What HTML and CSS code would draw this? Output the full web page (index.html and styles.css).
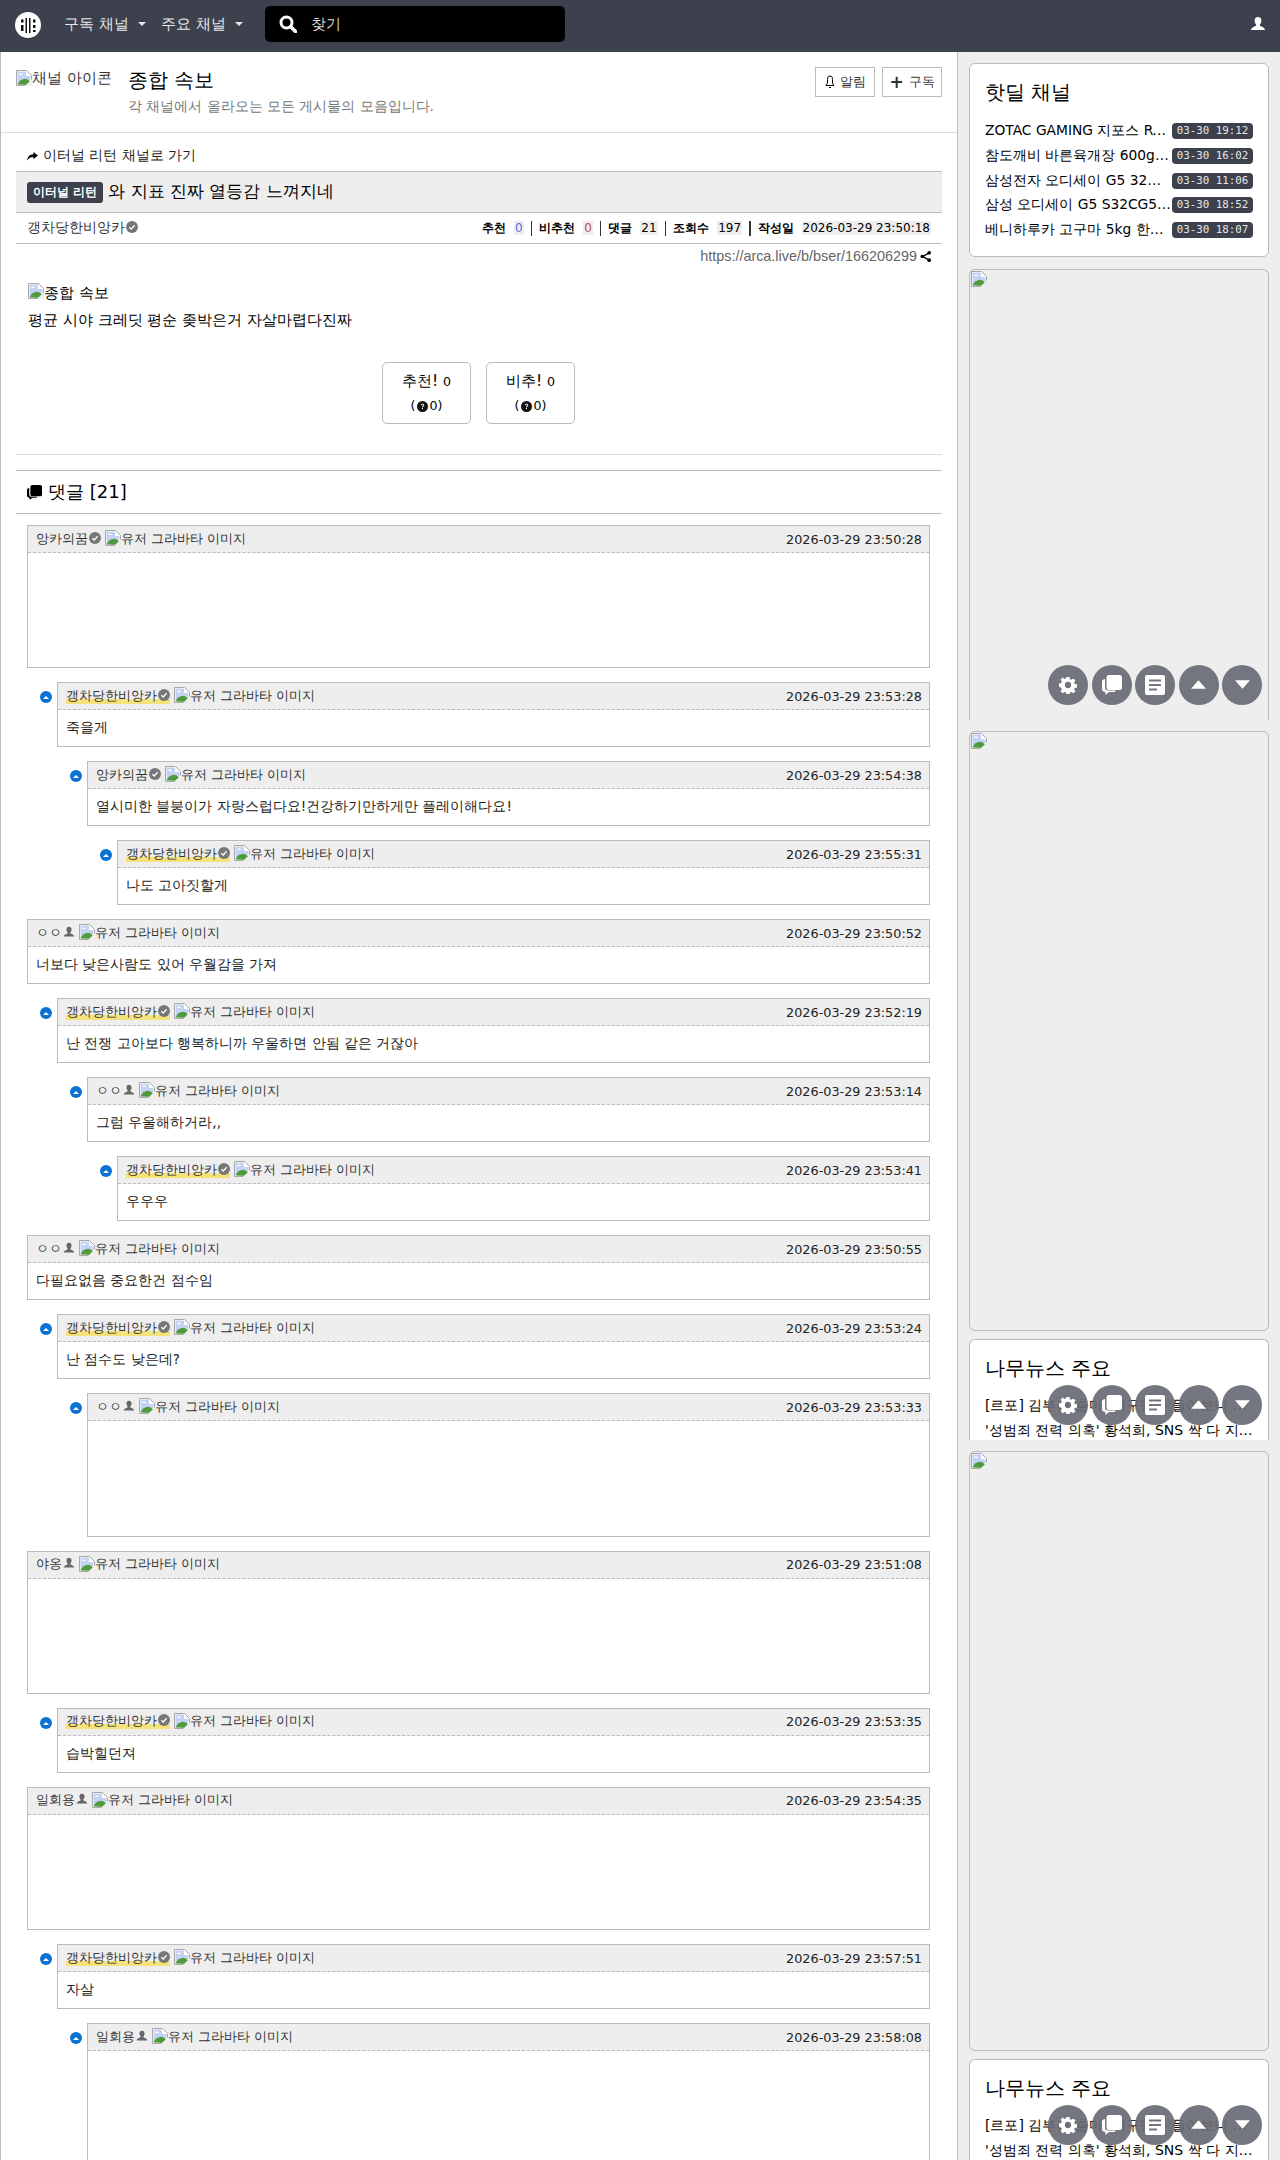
FILE: index.html
```html
<!DOCTYPE html>
<html>
<head>
    <meta charset="UTF-8">
    <meta name="viewport" content="width=device-width, initial-scale=1.0">
    <title>와 지표 진짜 열등감 느껴지네</title>
    <link rel="stylesheet" href="styles.css">
</head>
<body>
    <!-- shared icons -->
    <svg class="icon-defs" width="0" height="0">
        <symbol id="i-broken" viewBox="0 0 16 16">
            <path d="M.5.5h10l5 5v10H.5z" fill="#fff" stroke="#a8a8a8"/>
            <path d="M1.500 1.500h8.500v4.500h4.500v4L1.500 14z" fill="#c4d3f4"/>
            <path d="M3 5c1-2 3-2 4 0z" fill="#fff"/>
            <path d="M1.500 14.500c2-5 7-7 10-5l3 2v3.500z" fill="#4f9a3c"/>
            <path d="M9 16l7-7v7z" fill="#eee"/>
        </symbol>
        <symbol id="i-check" viewBox="0 0 16 16">
            <circle cx="8" cy="8" r="8" fill="#777"/>
            <path d="M4.500 8.300l2.500 2.400 4.500-5" fill="none" stroke="#fff" stroke-width="1.600"/>
        </symbol>
        <symbol id="i-user" viewBox="0 0 16 16">
            <path d="M8 1c2.300 0 3.400 1.700 3.400 3.700 0 1.500-.6 2.900-1.500 3.600v1.200c0 .7 5.100 1.500 5.100 4.500H1c0-3 5.100-3.800 5.100-4.500V8.300C5.200 7.600 4.600 6.200 4.600 4.700 4.600 2.700 5.700 1 8 1z"/>
        </symbol>
        <symbol id="i-collapse" viewBox="0 0 16 16">
            <circle cx="8" cy="8" r="8" fill="#0b72d4"/>
            <path d="M4 10.500L8 6.500l4 4z" fill="#fff"/>
        </symbol>
        <symbol id="i-help" viewBox="0 0 16 16">
            <circle cx="8" cy="8" r="8" fill="#111"/>
            <path d="M5.600 6.200C5.700 4.700 6.800 4 8.100 4c1.400 0 2.400.8 2.400 2 0 1.800-1.900 1.700-1.900 3.300H7.300c0-2.200 1.800-2.200 1.800-3.200 0-.5-.4-.9-1-.9-.7 0-1.100.4-1.200 1zM7.200 10.300h1.500v1.600H7.200z" fill="#fff"/>
        </symbol>
        <symbol id="i-bubbles" viewBox="0 0 20 20">
            <rect x="4.500" y="0" width="15.500" height="15" rx="2.500"/>
            <path d="M3 4v9c0 1.500 1 2.500 2.500 2.500H14l-1.500 1.500H7l-3.500 3v-3C1.500 17 0 16 0 14V6.500C0 5 1.500 4 3 4z"/>
        </symbol>
        <symbol id="i-gear" viewBox="0 0 20 20">
            <path d="M8.300 1h3.400l.5 2.500 1.500.7 2.200-1.400 2.300 2.300-1.400 2.200.6 1.500 2.600.5v3.400l-2.600.5-.6 1.500 1.400 2.200-2.300 2.300-2.200-1.400-1.500.6-.5 2.600H8.300l-.5-2.600-1.500-.6-2.200 1.400-2.300-2.300 1.400-2.200-.6-1.500L0 11.700V8.300l2.600-.5.6-1.500-1.400-2.200 2.300-2.300 2.200 1.400 1.500-.7zM10 6.500a3.500 3.500 0 100 7 3.500 3.500 0 000-7z" fill-rule="evenodd"/>
        </symbol>
        <symbol id="i-list" viewBox="0 0 20 20">
            <path d="M2 0h16a2 2 0 012 2v16a2 2 0 01-2 2H2a2 2 0 01-2-2V2a2 2 0 012-2zm2 4.500v2h12v-2zm0 4.500v2h12V9zm0 4.500v2h8v-2z" fill-rule="evenodd"/>
        </symbol>
        <symbol id="i-up" viewBox="0 0 16 10"><path d="M8 0l8 9H0z"/></symbol>
        <symbol id="i-down" viewBox="0 0 16 10"><path d="M0 0h16L8 9z"/></symbol>
    </svg>

    <!-- Header -->
    <header class="navbar">
        <svg class="logo" viewBox="0 0 26 26">
            <circle cx="13" cy="13" r="13" fill="#fff"/>
            <path d="M6 7.500h2.500v3H6zM6 13h2.500v6H6zM10.500 6H12v15h-1.500zM14 6h1.500v15H14zM18 7.500h2.500v3H18zM18 13h2.500v3H18zM18 18h2.500v2H18z" fill="#111"/>
        </svg>
        <a class="nav-link">구독 채널<i class="caret"></i></a>
        <a class="nav-link">주요 채널<i class="caret"></i></a>
        <div class="nav-search">
            <svg class="search-icon" viewBox="0 0 18 18">
                <circle cx="7.500" cy="7.500" r="5.500" fill="none" stroke="#fff" stroke-width="3"/>
                <path d="M11.500 11.500l5 5" stroke="#fff" stroke-width="3.500" stroke-linecap="round"/>
            </svg>
            <span>찾기</span>
        </div>
        <svg class="nav-user"><use href="#i-user"/></svg>
    </header>

    <div class="layout">
        <!-- Main Section -->
        <main class="content">
            <div class="channel-head">
                <div class="channel-icon">
                    <svg class="broken"><use href="#i-broken"/></svg><span>채널 아이콘</span>
                </div>
                <div class="channel-info">
                    <h2>종합 속보</h2>
                    <p>각 채널에서 올라오는 모든 게시물의 모음입니다.</p>
                </div>
                <div class="channel-btns">
                    <a class="btn-outline">
                        <svg class="btn-bell" viewBox="0 0 10 14"><path d="M5 1C3 1 2.500 2.500 2.500 4.500v3.500L1 10.500h8L7.500 8V4.500C7.500 2.500 7 1 5 1zM4 12.500h2" fill="none" stroke="#000"/></svg>
                        알림
                    </a>
                    <a class="btn-outline"><b class="plus">+</b> 구독</a>
                </div>
            </div>

            <div class="article">
                <a class="back-link">
                    <svg class="back-icon" viewBox="0 0 12 10"><path d="M7 0l5 4-5 4V5.500C4 5.500 2 6.500 0 9.500 .5 5 3 2.700 7 2.500z"/></svg>
                    이터널 리턴 채널로 가기
                </a>
                <div class="article-title">
                    <span class="badge">이터널 리턴</span>
                    <span class="title-text">와 지표 진짜 열등감 느껴지네</span>
                </div>
                <div class="article-info">
                    <span class="author">갱차당한비앙카<svg class="mark big"><use href="#i-check"/></svg></span>
                    <div class="stats">
                        <b>추천</b><span class="val blue">0</span><i class="sep"></i>
                        <b>비추천</b><span class="val red">0</span><i class="sep"></i>
                        <b>댓글</b><span class="val">21</span><i class="sep"></i>
                        <b>조회수</b><span class="val">197</span><i class="sep"></i>
                        <b>작성일</b><span class="val">2026-03-29 23:50:18</span>
                    </div>
                </div>
                <div class="article-url">
                    https://arca.live/b/bser/166206299
                    <svg class="share" viewBox="0 0 12 12"><path d="M10 2L3 6l7 4" fill="none" stroke="#000" stroke-width="1.500"/><circle cx="10" cy="2" r="2"/><circle cx="2.500" cy="6" r="2"/><circle cx="10" cy="10" r="2"/></svg>
                </div>
                <div class="article-body">
                    <p class="article-img"><svg class="broken"><use href="#i-broken"/></svg>종합 속보</p>
                    <p>평균 시야 크레딧 평순 좆박은거 자살마렵다진짜</p>
                </div>
                <div class="votes">
                    <div class="vote">
                        <div>추천! <small>0</small></div>
                        <div class="vote-sub">(<svg class="help"><use href="#i-help"/></svg> 0)</div>
                    </div>
                    <div class="vote">
                        <div>비추! <small>0</small></div>
                        <div class="vote-sub">(<svg class="help"><use href="#i-help"/></svg> 0)</div>
                    </div>
                </div>
                <hr class="soft">
                <h4 class="reply-title">
                    <svg class="reply-icon"><use href="#i-bubbles"/></svg>
                    댓글 [21]
                </h4>

                <div class="comments">
                    <div class="comment">
                        <div class="c-head">
                            <span class="c-name">앙카의꿈<svg class="mark"><use href="#i-check"/></svg></span>
                            <span class="c-avatar"><svg class="broken"><use href="#i-broken"/></svg>유저 그라바타 이미지</span>
                            <span class="c-time">2026-03-29 23:50:28</span>
                        </div>
                        <div class="c-body empty"></div>
                    </div>
                    <div class="comment depth-1">
                        <svg class="fold"><use href="#i-collapse"/></svg>
                        <div class="c-head">
                            <span class="c-name op">갱차당한비앙카<svg class="mark"><use href="#i-check"/></svg></span>
                            <span class="c-avatar"><svg class="broken"><use href="#i-broken"/></svg>유저 그라바타 이미지</span>
                            <span class="c-time">2026-03-29 23:53:28</span>
                        </div>
                        <div class="c-body">죽을게</div>
                    </div>
                    <div class="comment depth-2">
                        <svg class="fold"><use href="#i-collapse"/></svg>
                        <div class="c-head">
                            <span class="c-name">앙카의꿈<svg class="mark"><use href="#i-check"/></svg></span>
                            <span class="c-avatar"><svg class="broken"><use href="#i-broken"/></svg>유저 그라바타 이미지</span>
                            <span class="c-time">2026-03-29 23:54:38</span>
                        </div>
                        <div class="c-body">열시미한 블붕이가 자랑스럽다요!건강하기만하게만 플레이해다요!</div>
                    </div>
                    <div class="comment depth-3">
                        <svg class="fold"><use href="#i-collapse"/></svg>
                        <div class="c-head">
                            <span class="c-name op">갱차당한비앙카<svg class="mark"><use href="#i-check"/></svg></span>
                            <span class="c-avatar"><svg class="broken"><use href="#i-broken"/></svg>유저 그라바타 이미지</span>
                            <span class="c-time">2026-03-29 23:55:31</span>
                        </div>
                        <div class="c-body">나도 고아짓할게</div>
                    </div>
                    <div class="comment">
                        <div class="c-head">
                            <span class="c-name">ㅇㅇ<svg class="mark guest"><use href="#i-user"/></svg></span>
                            <span class="c-avatar"><svg class="broken"><use href="#i-broken"/></svg>유저 그라바타 이미지</span>
                            <span class="c-time">2026-03-29 23:50:52</span>
                        </div>
                        <div class="c-body">너보다 낮은사람도 있어 우월감을 가져</div>
                    </div>
                    <div class="comment depth-1">
                        <svg class="fold"><use href="#i-collapse"/></svg>
                        <div class="c-head">
                            <span class="c-name op">갱차당한비앙카<svg class="mark"><use href="#i-check"/></svg></span>
                            <span class="c-avatar"><svg class="broken"><use href="#i-broken"/></svg>유저 그라바타 이미지</span>
                            <span class="c-time">2026-03-29 23:52:19</span>
                        </div>
                        <div class="c-body">난 전쟁 고아보다 행복하니까 우울하면 안됨 같은 거잖아</div>
                    </div>
                    <div class="comment depth-2">
                        <svg class="fold"><use href="#i-collapse"/></svg>
                        <div class="c-head">
                            <span class="c-name">ㅇㅇ<svg class="mark guest"><use href="#i-user"/></svg></span>
                            <span class="c-avatar"><svg class="broken"><use href="#i-broken"/></svg>유저 그라바타 이미지</span>
                            <span class="c-time">2026-03-29 23:53:14</span>
                        </div>
                        <div class="c-body">그럼 우울해하거라,,</div>
                    </div>
                    <div class="comment depth-3">
                        <svg class="fold"><use href="#i-collapse"/></svg>
                        <div class="c-head">
                            <span class="c-name op">갱차당한비앙카<svg class="mark"><use href="#i-check"/></svg></span>
                            <span class="c-avatar"><svg class="broken"><use href="#i-broken"/></svg>유저 그라바타 이미지</span>
                            <span class="c-time">2026-03-29 23:53:41</span>
                        </div>
                        <div class="c-body">우우우</div>
                    </div>
                    <div class="comment">
                        <div class="c-head">
                            <span class="c-name">ㅇㅇ<svg class="mark guest"><use href="#i-user"/></svg></span>
                            <span class="c-avatar"><svg class="broken"><use href="#i-broken"/></svg>유저 그라바타 이미지</span>
                            <span class="c-time">2026-03-29 23:50:55</span>
                        </div>
                        <div class="c-body">다필요없음 중요한건 점수임</div>
                    </div>
                    <div class="comment depth-1">
                        <svg class="fold"><use href="#i-collapse"/></svg>
                        <div class="c-head">
                            <span class="c-name op">갱차당한비앙카<svg class="mark"><use href="#i-check"/></svg></span>
                            <span class="c-avatar"><svg class="broken"><use href="#i-broken"/></svg>유저 그라바타 이미지</span>
                            <span class="c-time">2026-03-29 23:53:24</span>
                        </div>
                        <div class="c-body">난 점수도 낮은데?</div>
                    </div>
                    <div class="comment depth-2">
                        <svg class="fold"><use href="#i-collapse"/></svg>
                        <div class="c-head">
                            <span class="c-name">ㅇㅇ<svg class="mark guest"><use href="#i-user"/></svg></span>
                            <span class="c-avatar"><svg class="broken"><use href="#i-broken"/></svg>유저 그라바타 이미지</span>
                            <span class="c-time">2026-03-29 23:53:33</span>
                        </div>
                        <div class="c-body empty"></div>
                    </div>
                    <div class="comment">
                        <div class="c-head">
                            <span class="c-name">야옹<svg class="mark guest"><use href="#i-user"/></svg></span>
                            <span class="c-avatar"><svg class="broken"><use href="#i-broken"/></svg>유저 그라바타 이미지</span>
                            <span class="c-time">2026-03-29 23:51:08</span>
                        </div>
                        <div class="c-body empty"></div>
                    </div>
                    <div class="comment depth-1">
                        <svg class="fold"><use href="#i-collapse"/></svg>
                        <div class="c-head">
                            <span class="c-name op">갱차당한비앙카<svg class="mark"><use href="#i-check"/></svg></span>
                            <span class="c-avatar"><svg class="broken"><use href="#i-broken"/></svg>유저 그라바타 이미지</span>
                            <span class="c-time">2026-03-29 23:53:35</span>
                        </div>
                        <div class="c-body">습박힐던져</div>
                    </div>
                    <div class="comment">
                        <div class="c-head">
                            <span class="c-name">일회용<svg class="mark guest"><use href="#i-user"/></svg></span>
                            <span class="c-avatar"><svg class="broken"><use href="#i-broken"/></svg>유저 그라바타 이미지</span>
                            <span class="c-time">2026-03-29 23:54:35</span>
                        </div>
                        <div class="c-body empty"></div>
                    </div>
                    <div class="comment depth-1">
                        <svg class="fold"><use href="#i-collapse"/></svg>
                        <div class="c-head">
                            <span class="c-name op">갱차당한비앙카<svg class="mark"><use href="#i-check"/></svg></span>
                            <span class="c-avatar"><svg class="broken"><use href="#i-broken"/></svg>유저 그라바타 이미지</span>
                            <span class="c-time">2026-03-29 23:57:51</span>
                        </div>
                        <div class="c-body">자살</div>
                    </div>
                    <div class="comment depth-2">
                        <svg class="fold"><use href="#i-collapse"/></svg>
                        <div class="c-head">
                            <span class="c-name">일회용<svg class="mark guest"><use href="#i-user"/></svg></span>
                            <span class="c-avatar"><svg class="broken"><use href="#i-broken"/></svg>유저 그라바타 이미지</span>
                            <span class="c-time">2026-03-29 23:58:08</span>
                        </div>
                        <div class="c-body empty"></div>
                    </div>
                </div>
            </div>
        </main>

        <!-- Sidebar -->
        <aside class="sidebar">
            <div class="side-chunk chunk-1">
                <div class="card deals">
                    <h5>핫딜 채널</h5>
                    <ul>
                        <li><span class="deal-name">ZOTAC GAMING 지포스 RTX 5070 TI</span><time>03-30 19:12</time></li>
                        <li><span class="deal-name">참도깨비 바른육개장 600g 10개입</span><time>03-30 16:02</time></li>
                        <li><span class="deal-name">삼성전자 오디세이 G5 32인치 모니터</span><time>03-30 11:06</time></li>
                        <li><span class="deal-name">삼성 오디세이 G5 S32CG510 QHD</span><time>03-30 18:52</time></li>
                        <li><span class="deal-name">베니하루카 고구마 5kg 한박스 특가</span><time>03-30 18:07</time></li>
                    </ul>
                </div>
                <div class="card ad ad-open"><svg class="broken"><use href="#i-broken"/></svg></div>
                <div class="fab-row">
                    <span class="fab"><svg class="fab-gear"><use href="#i-gear"/></svg></span>
                    <span class="fab"><svg class="fab-chat"><use href="#i-bubbles"/></svg></span>
                    <span class="fab"><svg class="fab-list"><use href="#i-list"/></svg></span>
                    <span class="fab"><svg class="fab-arrow"><use href="#i-up"/></svg></span>
                    <span class="fab"><svg class="fab-arrow"><use href="#i-down"/></svg></span>
                </div>
            </div>
            <div class="side-chunk">
                <div class="card ad ad-tall"><svg class="broken"><use href="#i-broken"/></svg></div>
                <div class="card news">
                    <h5>나무뉴스 주요</h5>
                    <p>[르포] 김부겸 출마, 대구민주 들어보니 이번에는</p>
                    <p>'성범죄 전력 의혹' 황석희, SNS 싹 다 지우고 잠적</p>
                </div>
                <div class="fab-row">
                    <span class="fab"><svg class="fab-gear"><use href="#i-gear"/></svg></span>
                    <span class="fab"><svg class="fab-chat"><use href="#i-bubbles"/></svg></span>
                    <span class="fab"><svg class="fab-list"><use href="#i-list"/></svg></span>
                    <span class="fab"><svg class="fab-arrow"><use href="#i-up"/></svg></span>
                    <span class="fab"><svg class="fab-arrow"><use href="#i-down"/></svg></span>
                </div>
            </div>
            <div class="side-chunk">
                <div class="card ad ad-tall"><svg class="broken"><use href="#i-broken"/></svg></div>
                <div class="card news">
                    <h5>나무뉴스 주요</h5>
                    <p>[르포] 김부겸 출마, 대구민주 들어보니 이번에는</p>
                    <p>'성범죄 전력 의혹' 황석희, SNS 싹 다 지우고 잠적</p>
                </div>
                <div class="fab-row">
                    <span class="fab"><svg class="fab-gear"><use href="#i-gear"/></svg></span>
                    <span class="fab"><svg class="fab-chat"><use href="#i-bubbles"/></svg></span>
                    <span class="fab"><svg class="fab-list"><use href="#i-list"/></svg></span>
                    <span class="fab"><svg class="fab-arrow"><use href="#i-up"/></svg></span>
                    <span class="fab"><svg class="fab-arrow"><use href="#i-down"/></svg></span>
                </div>
            </div>
        </aside>
    </div>
</body>
</html>
```

FILE: styles.css
```css
/* Reset */
* {
    margin: 0;
    padding: 0;
    box-sizing: border-box;
}

body {
    font-family: "DejaVu Sans", sans-serif;
    font-size: 14px;
    color: #000;
    background-color: #eee;
    height: 2160px;
    overflow: hidden;
}

.icon-defs {
    position: absolute;
}

.broken {
    width: 16px;
    height: 16px;
    flex: none;
}

/* Header */
.navbar {
    height: 52px;
    background-color: #3d414d;
    display: flex;
    align-items: center;
    color: #fff;
    padding: 0 14px 4px 15px;
}

.logo {
    width: 26px;
    height: 26px;
    margin: 2px 23px 0 0;
}

.nav-link {
    font-size: 15.400px;
    color: #e8e8ea;
    display: flex;
    align-items: center;
    margin-right: 15px;
}

.caret {
    margin-left: 9px;
    border-top: 4px solid #e8e8ea;
    border-left: 4px solid transparent;
    border-right: 4px solid transparent;
}

.nav-search {
    width: 300px;
    height: 36px;
    margin-left: 7px;
    background-color: #000;
    border-radius: 5px;
    display: flex;
    align-items: center;
    padding-left: 14px;
    font-size: 15.400px;
    color: #ddd;
}

.search-icon {
    width: 18px;
    height: 18px;
    margin-right: 14px;
}

.nav-user {
    width: 16px;
    height: 16px;
    margin-left: auto;
    fill: #fff;
}

/* Layout */
.layout {
    display: flex;
    height: 2108px;
}

.content {
    width: 958px;
    height: 100%;
    background-color: #fff;
    border-left: 1px solid #bbb;
    border-right: 1px solid #bbb;
    overflow: hidden;
}

.sidebar {
    width: 322px;
    padding-left: 11px;
}

/* Channel header */
.channel-head {
    height: 81px;
    border-bottom: 1px solid #ddd;
    display: flex;
    padding: 15px 15px 0;
}

.channel-icon {
    width: 95px;
    height: 22px;
    font-size: 15.400px;
    color: #333;
    display: flex;
    align-items: center;
    overflow: hidden;
    white-space: nowrap;
}

.channel-info {
    margin-left: 17px;
}

.channel-info h2 {
    font-size: 19.600px;
    font-weight: 400;
    line-height: 24px;
    margin-top: 2px;
}

.channel-info p {
    font-size: 13.600px;
    line-height: 17px;
    color: #777;
    margin-top: 5px;
}

.channel-btns {
    margin-left: auto;
    display: flex;
    gap: 7px;
}

.btn-outline {
    width: 60px;
    height: 30px;
    border: 1px solid #bbb;
    font-size: 13px;
    color: #333;
    display: flex;
    align-items: center;
    justify-content: center;
    gap: 5px;
}

.btn-bell {
    width: 10px;
    height: 14px;
}

.plus {
    font-size: 17px;
    line-height: 1;
}

/* Article */
.article {
    padding: 0 15px;
}

.back-link {
    height: 38px;
    padding: 8px 0 0 11px;
    font-size: 13.600px;
    display: flex;
    align-items: center;
    gap: 5px;
    color: #222;
}

.back-icon {
    width: 11px;
    height: 9px;
}

.article-title {
    height: 42px;
    background-color: #eee;
    border-top: 1px solid #bbb;
    border-bottom: 1px solid #bbb;
    padding: 0 11px;
    display: flex;
    align-items: center;
    gap: 5px;
    font-size: 17px;
}

.title-text {
    margin-top: -2px;
}

.badge {
    background-color: #3d414d;
    color: #fff;
    font-size: 12px;
    font-weight: 700;
    height: 21px;
    line-height: 21px;
    padding: 0 6px;
    border-radius: 3px;
}

.article-info {
    height: 31px;
    border-bottom: 1px solid #bbb;
    padding: 0 11px;
    display: flex;
    align-items: center;
    justify-content: space-between;
}

.author {
    font-size: 13.600px;
    color: #333;
    display: flex;
    align-items: center;
}

.stats {
    font-size: 12px;
    display: flex;
    align-items: center;
}

.stats b {
    font-size: 12px;
    margin-right: 8px;
}

.val {
    background-color: #eee;
    padding: 0 1px;
    font-size: 12px;
}

.blue {
    color: #4d72d6;
}

.red {
    color: #b94a48;
}

.sep {
    width: 1.500px;
    height: 15px;
    background-color: #333;
    margin: 0 7px;
}

.article-url {
    height: 26px;
    padding: 0 11px 2px 0;
    font-family: "Liberation Sans", sans-serif;
    font-size: 14.400px;
    color: #666;
    display: flex;
    align-items: center;
    justify-content: flex-end;
    gap: 3px;
}

.share {
    width: 11px;
    height: 11px;
}

.article-body {
    padding: 10px 11px 0 12px;
    font-size: 15px;
    line-height: 27px;
}

.article-img {
    display: flex;
    align-items: center;
}

.article-body .broken {
    margin-top: -6px;
}

.votes {
    display: flex;
    justify-content: center;
    gap: 15px;
    margin-top: 28px;
    padding-right: 1px;
}

.vote {
    width: 89px;
    height: 62px;
    border: 1px solid #bbb;
    border-radius: 5px;
    text-align: center;
    padding-top: 6px;
    font-size: 15.400px;
    line-height: 24px;
}

.vote small {
    font-size: 12.600px;
}

.vote-sub {
    font-size: 12.600px;
    line-height: 24px;
    display: flex;
    justify-content: center;
    align-items: center;
    gap: 1.500px;
}

.help {
    width: 11px;
    height: 11px;
}

.soft {
    border: 0;
    border-top: 1px solid #ddd;
    margin-top: 30px;
}

.reply-title {
    height: 44px;
    margin-top: 15px;
    border-top: 1px solid #bbb;
    border-bottom: 1px solid #bbb;
    padding-left: 11px;
    font-size: 18px;
    font-weight: 400;
    display: flex;
    align-items: center;
    gap: 6px;
}

.reply-icon {
    width: 15px;
    height: 15px;
}

/* Comments */
.comments {
    margin-top: 11px;
    padding: 0 12px 0 11px;
    display: flex;
    flex-direction: column;
    gap: 14px;
}

.comment {
    position: relative;
    border: 1px solid #bbb;
}

.depth-1 {
    margin-left: 30px;
}

.depth-2 {
    margin-left: 60px;
}

.depth-3 {
    margin-left: 90px;
}

.fold {
    position: absolute;
    left: -18px;
    top: 8px;
    width: 12px;
    height: 12px;
}

.c-head {
    height: 27px;
    background-color: #eee;
    border-bottom: 1px dashed #bbb;
    padding: 0 7px 0 8px;
    display: flex;
    align-items: center;
    font-size: 12.800px;
    color: #333;
}

.c-name {
    display: flex;
    align-items: center;
}

.op {
    background: linear-gradient(transparent 62%, #f5e27a 62%, #f5e27a 94%, transparent 94%);
}

.mark {
    width: 12px;
    height: 12px;
    margin-top: -3px;
    margin-left: 1px;
}

.guest {
    fill: #666;
}

.c-avatar {
    display: flex;
    align-items: center;
    margin-left: 4px;
}

.c-avatar .broken {
    margin-top: -2px;
}

.c-time {
    margin-left: auto;
    color: #222;
}

.c-body {
    height: 36px;
    padding: 0 8px;
    display: flex;
    align-items: center;
    font-size: 13.600px;
    color: #222;
}

.c-body.empty {
    height: 114.250px;
}

/* Sidebar */
.side-chunk {
    position: relative;
    height: 720px;
    padding-top: 11px;
    display: flex;
    flex-direction: column;
    gap: 8px;
    overflow: hidden;
}

.chunk-1 {
    height: 668px;
    gap: 12px;
}

.card {
    width: 300px;
    border: 1px solid #bbb;
    border-radius: 6px;
}

.card h5 {
    font-size: 19.600px;
    font-weight: 400;
    line-height: 26px;
    margin-bottom: 11px;
}

.deals {
    height: 194px;
    background-color: #fff;
    padding: 16px 15px 0;
}

.deals ul {
    list-style: none;
    margin-top: 13px;
}

.deals li {
    height: 24.700px;
    display: flex;
    align-items: center;
    justify-content: space-between;
    gap: 1px;
    font-size: 13.800px;
}

.deal-name {
    white-space: nowrap;
    overflow: hidden;
    text-overflow: ellipsis;
}

.deals time {
    flex: none;
    width: 81px;
    text-align: center;
    font-family: "DejaVu Sans Mono", monospace;
    font-size: 10.800px;
    color: #e6e6e8;
    background-color: #3d414d;
    border-radius: 4px;
    line-height: 16px;
}

.ad {
    padding: 1px;
    font-size: 0;
}

.ad-open {
    flex: 1;
    border-bottom: 0;
    border-radius: 6px 6px 0 0;
}

.ad-tall {
    height: 600px;
    flex: none;
}

.news {
    flex: 1;
    background-color: #fff;
    padding: 16px 15px 0;
    border-bottom: 0;
    border-radius: 6px 6px 0 0;
}

.news p {
    font-size: 14px;
    line-height: 24.700px;
    white-space: nowrap;
    overflow: hidden;
    text-overflow: ellipsis;
}

/* floating buttons */
.fab-row {
    position: absolute;
    right: 18px;
    bottom: 15px;
    display: flex;
    gap: 3.500px;
}

.fab {
    width: 40px;
    height: 40px;
    border-radius: 50%;
    background-color: rgba(105, 107, 117, 0.92);
    fill: #fff;
    display: flex;
    align-items: center;
    justify-content: center;
}

.fab-gear {
    width: 18px;
    height: 18px;
}

.fab-chat,
.fab-list {
    width: 20px;
    height: 20px;
}

.fab-arrow {
    width: 15px;
    height: 10px;
}
```
